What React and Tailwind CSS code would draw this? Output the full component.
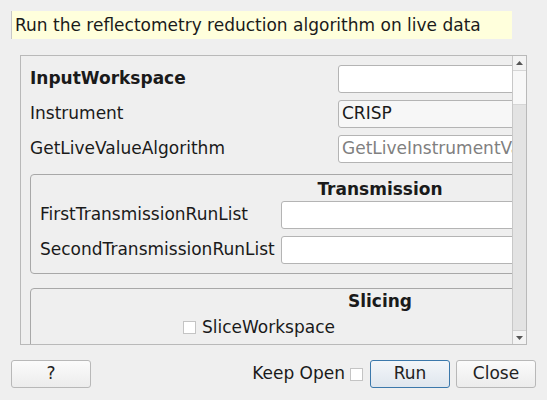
const font = { fontFamily: '"DejaVu Sans", sans-serif' };

function Field({ children, className = "" }) {
  return (
    <div
      className={`h-[28px] border border-[#b4b4b4] rounded-[3px] bg-white flex items-center px-[3px] shrink-0 ${className}`}
    >
      {children}
    </div>
  );
}

function Check() {
  return <span className="inline-block w-[13px] h-[13px] border border-[#c4c4c4] bg-white shrink-0" />;
}

function Button({ children, primary }) {
  return (
    <button
      className={`w-[80px] h-[28px] rounded-[3px] border text-[17px] text-[#222] flex items-center justify-center ${
        primary
          ? "border-[#3b78ab] bg-gradient-to-b from-[#f3f6f9] to-[#dfe6ee]"
          : "border-[#b8b8b8] bg-gradient-to-b from-[#fbfbfb] to-[#ececec]"
      }`}
    >
      {children}
    </button>
  );
}

export default function App() {
  return (
    <div className="w-[547px] h-[400px] bg-[#efefef] text-[17px] text-[#1a1a1a] overflow-hidden flex flex-col" style={font}>
      <div className="mt-[11px] ml-[11px] w-[501px] h-[28px] bg-[#ffffdc] border-l border-[#c8c8c8] flex items-center pl-[3px] leading-none">
        Run the reflectometry reduction algorithm on live data
      </div>

      <div className="mt-[16px] ml-[20px] w-[507px] h-[290px] border border-[#b9b9b9] flex">
        <div className="flex-1 overflow-hidden">
          <div className="w-[720px] pl-[9px] pt-[9px] flex flex-col">
            <div className="flex items-center h-[28px]">
              <span className="w-[308px] font-bold">InputWorkspace</span>
              <Field className="w-[200px]" />
            </div>
            <div className="flex items-center h-[28px] mt-[7px]">
              <span className="w-[308px]">Instrument</span>
              <Field className="w-[200px] !bg-[#f7f7f7]">CRISP</Field>
            </div>
            <div className="flex items-center h-[28px] mt-[7px]">
              <span className="w-[308px]">GetLiveValueAlgorithm</span>
              <Field className="w-[200px] text-[#808080] overflow-hidden whitespace-nowrap">GetLiveInstrumentValue</Field>
            </div>

            <div className="mt-[11px] w-[700px] h-[100px] border border-[#a8a8a8] rounded-[4px] px-[9px] pt-[3px]">
              <div className="text-center font-bold leading-[22px]">Transmission</div>
              <div className="flex items-center h-[28px] mt-[1px]">
                <span className="w-[241px]">FirstTransmissionRunList</span>
                <Field className="w-[400px]" />
              </div>
              <div className="flex items-center h-[28px] mt-[7px]">
                <span className="w-[241px]">SecondTransmissionRunList</span>
                <Field className="w-[400px]" />
              </div>
            </div>

            <div className="mt-[14px] w-[700px] h-[80px] border border-[#a8a8a8] rounded-[4px] px-[9px] pt-[1px]">
              <div className="text-center font-bold leading-[22px]">Slicing</div>
              <div className="flex items-center gap-[6px] pl-[143px] mt-[3px]">
                <Check />
                <span>SliceWorkspace</span>
              </div>
            </div>
          </div>
        </div>

        <div className="w-[14px] border-l border-[#c8c8c8] flex flex-col bg-[#e3e3e3]">
          <div className="h-[14px] bg-[#f3f3f3] flex items-center justify-center">
            <svg width="7" height="4" viewBox="0 0 7 4"><path d="M0 4 L3.5 0 L7 4 Z" fill="#555" /></svg>
          </div>
          <div className="h-[35px] bg-[#f8f8f8] border-y border-[#d6d6d6]" />
          <div className="flex-1" />
          <div className="h-[14px] bg-[#f3f3f3] border-t border-[#d0d0d0] flex items-center justify-center">
            <svg width="7" height="4" viewBox="0 0 7 4"><path d="M0 0 L3.5 4 L7 0 Z" fill="#555" /></svg>
          </div>
        </div>
      </div>

      <div className="mt-[15px] ml-[11px] mr-[11px] flex items-center">
        <Button>?</Button>
        <div className="flex-1" />
        <span className="mr-[5px]">Keep Open</span>
        <Check />
        <div className="w-[7px]" />
        <Button primary>Run</Button>
        <div className="w-[6px]" />
        <Button>Close</Button>
      </div>
    </div>
  );
}
